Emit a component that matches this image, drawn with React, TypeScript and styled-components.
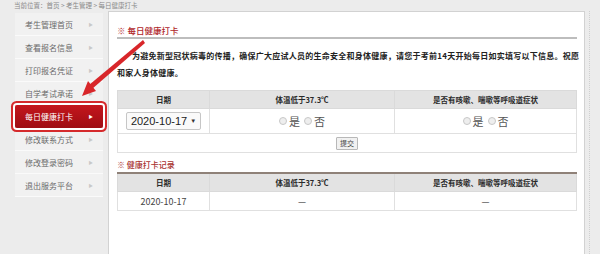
import styled, { createGlobalStyle } from "styled-components";

const GlobalStyle = createGlobalStyle`
  html, body {
    margin: 0;
    padding: 0;
    background: #ececec;
    font-family: "Noto Sans CJK SC", "Noto Sans", sans-serif;
  }
`;

const Page = styled.div`
  position: relative;
  width: 600px;
  height: 254px;
  overflow: hidden;
  background: #ececec;
`;

const Breadcrumb = styled.div`
  height: 11px;
  line-height: 10px;
  padding-left: 14px;
  font-size: 6.5px;
  color: #8a8a8a;
`;

const Main = styled.div`
  display: flex;
  height: 243px;
`;

const Sidebar = styled.ul`
  list-style: none;
  margin: 2px 5px 0 15px;
  padding: 0;
  width: 88px;
  align-self: flex-start;
  background: #f2f2f2;
`;

interface ItemProps {
  $active?: boolean;
}

const MenuItem = styled.li<ItemProps>`
  position: relative;
  display: flex;
  align-items: center;
  justify-content: space-between;
  height: 23px;
  padding: 0 10px 0 10px;
  box-sizing: border-box;
  font-size: 8px;
  color: ${(p) => (p.$active ? "#fff" : "#6a6a6a")};
  background: ${(p) =>
    p.$active ? "linear-gradient(#c4161d, #a00e14)" : "#f1f1f1"};
  border-bottom: 1px solid ${(p) => (p.$active ? "#a00e14" : "#fafafa")};
  border-radius: ${(p) => (p.$active ? "2px" : "0")};
  box-shadow: ${(p) =>
    p.$active ? "0 0 0 2px #fff, 0 0 0 4px #d52a2c" : "none"};
  z-index: ${(p) => (p.$active ? 1 : 0)};
`;

const Caret = styled.span<ItemProps>`
  font-size: 4.5px;
  color: ${(p) => (p.$active ? "#fff" : "#c8c8c8")};
`;

const Panel = styled.section`
  width: 477px;
  box-sizing: border-box;
  background: #fff;
  border: 1px solid #d2d2d2;
  border-bottom: none;
  padding: 12px 7px 0 8px;
`;

const RightRail = styled.div`
  flex: 1;
  margin-left: 4px;
  border-left: 1px dotted #cfcfcf;
`;

const Title = styled.h2`
  margin: 0;
  font-size: 8.5px;
  font-weight: 500;
  line-height: 12px;
  color: #b0272b;
  padding-bottom: 1px;
  border-bottom: 2px solid #bdbdbd;
`;

const Intro = styled.p`
  margin: 8px 0 0;
  font-size: 8px;
  font-weight: 700;
  line-height: 17px;
  letter-spacing: 0.25px;
  color: #222;
  white-space: nowrap;
`;

const Indent = styled.span`
  padding-left: 15px;
`;

const Table = styled.table<{ $top: number }>`
  width: 100%;
  margin-top: ${(p) => p.$top}px;
  border-collapse: collapse;
  table-layout: fixed;
`;

const HeadCell = styled.th<{ $dark?: boolean }>`
  height: 17px;
  padding: 0;
  background: #e3e3e3;
  border: 1px solid #dadada;
  border-top: ${(p) => (p.$dark ? "2px solid #8f8178" : "1px solid #dadada")};
  font-size: 7.5px;
  font-weight: 700;
  color: #2a2a2a;
`;

const Cell = styled.td<{ $h: number }>`
  height: ${(p) => p.$h}px;
  padding: 0;
  border: 1px solid #e0e0e0;
  text-align: center;
  font-size: 9px;
  color: #444;
`;

const Select = styled.div`
  display: inline-flex;
  align-items: center;
  gap: 3px;
  height: 16px;
  padding: 0 4px 0 4px;
  border: 1px solid #c6c6c6;
  border-radius: 2px;
  background: #fafafa;
  font-family: "Liberation Sans", Arial, sans-serif;
  font-size: 11px;
  color: #222;
`;

const SelectArrow = styled.span`
  font-size: 6px;
  color: #333;
`;

const RadioGroup = styled.div`
  display: inline-flex;
  align-items: center;
  gap: 4px;
  font-size: 11px;
  color: #555;
`;

const Radio = styled.span`
  display: inline-block;
  width: 6px;
  height: 6px;
  margin-right: 2px;
  border-radius: 50%;
  border: 1px solid #c8c8c8;
  background: #eee;
  vertical-align: middle;
`;

const Option = styled.label`
  display: inline-flex;
  align-items: center;
`;

const SubmitButton = styled.button`
  height: 13px;
  padding: 0 3px;
  font-family: "Noto Sans CJK SC", sans-serif;
  font-size: 7px;
  line-height: 11px;
  color: #444;
  background: #f1f1f1;
  border: 1px solid #b8b8b8;
  border-radius: 1px;
`;

const SubTitle = styled.h3`
  margin: 6px 0 0;
  font-size: 8px;
  font-weight: 500;
  line-height: 12px;
  color: #a8312f;
`;

const Dash = styled.span`
  font-size: 9px;
  color: #333;
`;

const Annotation = styled.svg`
  position: absolute;
  left: 0;
  top: 0;
  pointer-events: none;
`;

const menu = [
  "考生管理首页",
  "查看报名信息",
  "打印报名凭证",
  "自学考试承诺",
  "每日健康打卡",
  "修改联系方式",
  "修改登录密码",
  "退出服务平台",
];

const YesNo = () => (
  <RadioGroup>
    <Option>
      <Radio />是
    </Option>
    <Option>
      <Radio />否
    </Option>
  </RadioGroup>
);

const App = () => {
  return (
    <Page>
      <GlobalStyle />
      <Breadcrumb>当前位置：首页 &gt; 考生管理 &gt; 每日健康打卡</Breadcrumb>
      <Main>
        <Sidebar>
          {menu.map((label) => {
            const active = label === "每日健康打卡";
            return (
              <MenuItem key={label} $active={active}>
                {label}
                <Caret $active={active}>▶</Caret>
              </MenuItem>
            );
          })}
        </Sidebar>
        <Panel>
          <Title>※ 每日健康打卡</Title>
          <Intro>
            <Indent />
            为避免新型冠状病毒的传播，确保广大应试人员的生命安全和身体健康，请您于考前14天开始每日如实填写以下信息。祝愿
            <br />
            和家人身体健康。
          </Intro>
          <Table $top={9}>
            <colgroup>
              <col style={{ width: 92 }} />
              <col style={{ width: 185 }} />
              <col />
            </colgroup>
            <thead>
              <tr>
                <HeadCell>日期</HeadCell>
                <HeadCell>体温低于37.3℃</HeadCell>
                <HeadCell>是否有咳嗽、喘嗽等呼吸道症状</HeadCell>
              </tr>
            </thead>
            <tbody>
              <tr>
                <Cell $h={24}>
                  <Select>
                    2020-10-17<SelectArrow>▼</SelectArrow>
                  </Select>
                </Cell>
                <Cell $h={24}>
                  <YesNo />
                </Cell>
                <Cell $h={24}>
                  <YesNo />
                </Cell>
              </tr>
              <tr>
                <Cell $h={18} colSpan={3}>
                  <SubmitButton>提交</SubmitButton>
                </Cell>
              </tr>
            </tbody>
          </Table>
          <SubTitle>※ 健康打卡记录</SubTitle>
          <Table $top={1}>
            <colgroup>
              <col style={{ width: 92 }} />
              <col style={{ width: 185 }} />
              <col />
            </colgroup>
            <thead>
              <tr>
                <HeadCell $dark>日期</HeadCell>
                <HeadCell $dark>体温低于37.3℃</HeadCell>
                <HeadCell $dark>是否有咳嗽、喘嗽等呼吸道症状</HeadCell>
              </tr>
            </thead>
            <tbody>
              <tr>
                <Cell $h={18}>2020-10-17</Cell>
                <Cell $h={18}>
                  <Dash>—</Dash>
                </Cell>
                <Cell $h={18}>
                  <Dash>—</Dash>
                </Cell>
              </tr>
            </tbody>
          </Table>
        </Panel>
        <RightRail />
      </Main>
      <Annotation width="600" height="254" viewBox="0 0 600 254">
        <polygon points="143,40 145,43 92,89 89,85" fill="#d8262a" />
        <polygon points="82,96 96,91 88,81" fill="#d8262a" />
      </Annotation>
    </Page>
  );
};

export default App;
